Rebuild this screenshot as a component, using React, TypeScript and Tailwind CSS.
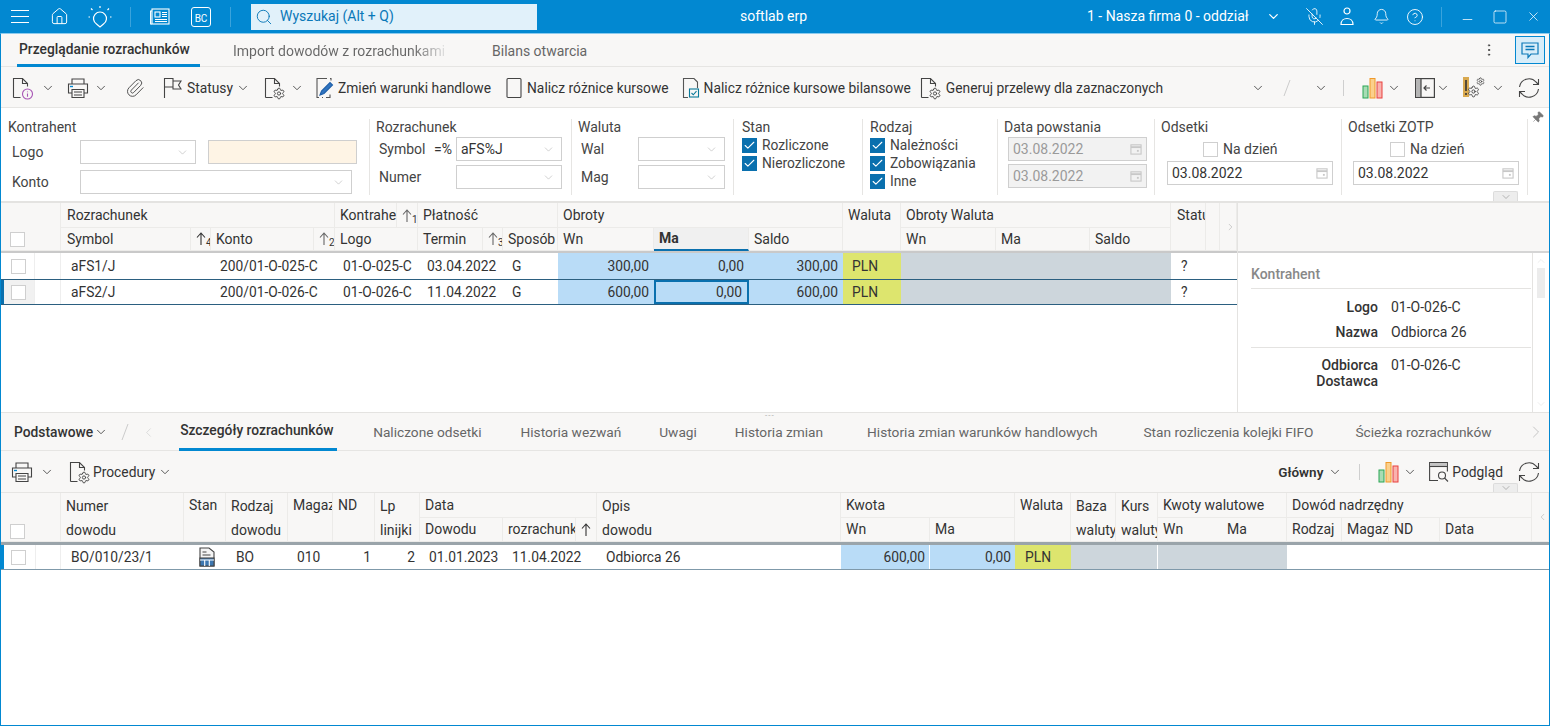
import React from 'react';
import { Bell, Check, ChevronDown, ChevronLeft, ChevronRight, CircleHelp, Home, MicOff, Minus, Paperclip, Pin, Search, Settings, Square, X, EllipsisVertical } from 'lucide-react';

const Chev = ({ className = '' }: { className?: string }) => (
  <ChevronDown size={14} strokeWidth={1.5} className={`shrink-0 text-[#444] ${className}`} />
);

const Doc = ({ children }: { children?: React.ReactNode }) => (
  <svg width="24" height="24" viewBox="0 0 24 24" fill="none" stroke="#444" strokeWidth="1.1" className="shrink-0">
    <path d="M1.500 21.500V2.500h9l5 5v3M10.500 2.500v5h5M1.500 21.500h7" />
    {children}
  </svg>
);

const DocInfo = () => (
  <Doc>
    <circle cx="15.500" cy="18" r="5" stroke="#a855b5" />
    <path d="M15.500 15.500v.8M15.500 17.500v3.200" stroke="#a855b5" />
  </Doc>
);

const DocGear = () => (
  <Doc>
    <Settings x={8.500} y={11} width={13} height={13} strokeWidth={1.7} color="#444" />
  </Doc>
);

const Printer = () => (
  <svg width="22" height="22" viewBox="0 0 22 22" fill="none" stroke="#444" strokeWidth="1.1" className="shrink-0">
    <path d="M5 7V2h12v5M5 16H1.500V7h19v9H17" />
    <path d="M5 12.500h12v8H5zM7 15h8M7 18h8" />
    <path d="M3 9.500h3" stroke="#0288d1" strokeWidth="1.400" />
  </svg>
);

const Flag = () => (
  <svg width="20" height="22" viewBox="0 0 20 22" fill="none" stroke="#444" strokeWidth="1.1" className="shrink-0">
    <path d="M1.500 21V1.500h8.500v2.500h8l-2.500 4 2.500 4h-8V10H1.500M10 4v6" />
  </svg>
);

const PenDoc = () => (
  <svg width="20" height="22" viewBox="0 0 20 22" fill="none" stroke="#555" strokeWidth="1.1" className="shrink-0">
    <path d="M12 1.500H2v19h2M7 20.500h1M11 20.500h4v-3M15 1.500h1v2" />
    <path d="M5 18l1.500-4L15 5.500l2.500 2.500L9 16.500z" fill="#2f74c0" stroke="#1f5fa8" />
  </svg>
);

const PlainDoc = () => (
  <svg width="16" height="22" viewBox="0 0 16 22" fill="none" stroke="#444" strokeWidth="1.1" className="shrink-0">
    <rect x="1" y="1.500" width="14" height="19" rx="1" />
  </svg>
);

const DocCheck = () => (
  <svg width="18" height="22" viewBox="0 0 18 22" fill="none" stroke="#555" strokeWidth="1.1" className="shrink-0">
    <path d="M6 20.500H1.500v-19H12l3.500 3.500v6" />
    <rect x="7.500" y="12" width="9" height="8" stroke="#0a7a9a" />
    <path d="M9.500 16l1.800 1.800 3.200-3.600" stroke="#0a7a9a" />
  </svg>
);

const Chart = () => (
  <svg width="22" height="22" viewBox="0 0 22 22" fill="none" className="shrink-0">
    <rect x="1" y="9" width="5" height="12" fill="#a8dcb4" stroke="#2aa655" />
    <rect x="8" y="1.500" width="5" height="19.500" fill="#fbd08c" stroke="#ef9a2a" />
    <rect x="15" y="5" width="5" height="16" fill="#f9b2ae" stroke="#e8413c" />
  </svg>
);

const PanelArrow = () => (
  <svg width="20" height="20" viewBox="0 0 20 20" fill="none" stroke="#444" strokeWidth="1.2" className="shrink-0">
    <rect x="0.600" y="0.600" width="18.800" height="18.800" />
    <rect x="1" y="1" width="5" height="18" fill="#b5b5b5" stroke="none" />
    <path d="M6 1v18M15 10H9.500M11.500 7.500L9 10l2.500 2.500" />
  </svg>
);

const WarnGear = () => (
  <svg width="24" height="24" viewBox="0 0 24 24" fill="none" stroke="#444" strokeWidth="1.1" className="shrink-0">
    <rect x="1" y="1" width="6" height="20" fill="#d9a94f" stroke="none" />
    <path d="M4 4v11M4 17v2" stroke="#333" strokeWidth="1.600" />
    <Settings x={5} y={9} width={13} height={13} strokeWidth={1.700} color="#444" />
    <Settings x={14} y={1} width={9} height={9} strokeWidth={2} color="#444" />
  </svg>
);

const Refresh = () => (
  <svg width="22" height="22" viewBox="0 0 22 22" fill="none" stroke="#444" strokeWidth="1.1" className="shrink-0">
    <path d="M1.500 10A9.500 9.500 0 0 1 18 5l2.500 2.500M20.500 2v5.500H15" />
    <path d="M20.500 12A9.500 9.500 0 0 1 4 17l-2.500-2.500M1.500 20v-5.500H7" />
  </svg>
);

const Preview = () => (
  <svg width="20" height="20" viewBox="0 0 20 20" fill="none" stroke="#444" strokeWidth="1.1" className="shrink-0">
    <path d="M9 18.500H.600V.600h17.800v9" />
    <rect x="1" y="1" width="17" height="3" fill="#c4c4c4" stroke="none" />
    <path d="M.600 4.500h17.800" />
    <circle cx="13" cy="13.500" r="3.500" />
    <path d="M15.500 16l3.500 3.500" />
  </svg>
);

const StatusDoc = () => (
  <svg width="16" height="20" viewBox="0 0 16 20" fill="none" stroke="#444" strokeWidth="1.1">
    <path d="M1 19V1h9l5 4v14z" fill="#f4f4f4" />
    <path d="M3.500 5h4M3.500 8h8" />
    <rect x="1" y="11" width="14" height="8" fill="#3d77b0" stroke="#444" />
    <path d="M5.700 13v6M10.300 13v6M1 13h14" stroke="#fff" />
  </svg>
);

const Slash = () => (
  <svg width="8" height="18" viewBox="0 0 8 18" fill="none" stroke="#ccc" strokeWidth="1" className="shrink-0">
    <path d="M7 1L1 17" />
  </svg>
);

const Box = ({ checked = false }: { checked?: boolean }) =>
  checked ? (
    <span className="w-[15px] h-[15px] bg-[#0a70ae] flex items-center justify-center shrink-0">
      <Check size={13} strokeWidth={2} className="text-white" />
    </span>
  ) : (
    <span className="w-[15px] h-[15px] bg-white border border-[#cfcfcf] block shrink-0" />
  );

const Field = ({ className, value, arrow = true }: { className: string; value?: string; arrow?: boolean }) => (
  <div className={`h-[24px] border border-[#cfcfcf] flex items-center pl-[4px] pr-[6px] bg-white text-[14px] text-[#333] ${className}`}>
    <span className="flex-1">{value}</span>
    {arrow && <ChevronDown size={13} strokeWidth={1} className="text-[#aaa]" />}
  </div>
);

const Cal = () => (
  <svg width="12" height="12" viewBox="0 0 13 13" fill="none" stroke="#c8c8c8" strokeWidth="1.200" className="shrink-0">
    <rect x="1" y="2" width="11" height="10" />
    <path d="M1 4.500h11" strokeWidth="2" />
    <rect x="7.500" y="7.500" width="2" height="2" fill="#c8c8c8" stroke="none" />
  </svg>
);

const DateField = ({ value, disabled = false, className = '' }: { value: string; disabled?: boolean; className?: string }) => (
  <div className={`h-[24px] border border-[#cfcfcf] flex items-center pl-[4px] pr-[4px] text-[14px] ${disabled ? 'bg-[#f2f2f2] text-[#9a9a9a]' : 'bg-white text-[#333]'} ${className}`}>
    <span className="flex-1">{value}</span>
    <Cal />
  </div>
);

const Label = ({ children, className = '' }: { children: React.ReactNode; className?: string }) => (
  <div className={`text-[14px] leading-[16px] text-[#444] ${className}`}>{children}</div>
);

const CheckRow = ({ label }: { label: string }) => (
  <div className="flex items-center h-[18px] gap-[5px] text-[13.800px] text-[#444]">
    <Box checked />
    <span>{label}</span>
  </div>
);

const TOP_COLS = 'grid grid-cols-[33px_27px_130px_20px_103px_21px_62px_21px_65px_20px_55px_96px_95px_94px_58px_95px_94px_81px_35px_14px_17px]';
const BOT_COLS = 'grid grid-cols-[34px_26px_123px_42px_62px_45px_42px_45px_83px_73px_21px_244px_89px_85px_56px_45px_42px_64px_65px_55px_47px_51px_92px_17px]';

const H = ({ className = '', children }: { className?: string; children?: React.ReactNode }) => (
  <div className={`border-r border-b border-[#ecebe9] pl-[5px] flex items-center overflow-hidden whitespace-nowrap text-[14px] text-[#333] ${className}`}>
    {children}
  </div>
);

const Sort = ({ n, dark = false }: { n?: string; dark?: boolean }) => (
  <H className="pl-[3px] items-end pb-[5px]">
    <svg width="10" height="13" viewBox="0 0 10 13" fill="none" stroke={dark ? '#333' : '#666'} strokeWidth="1.100" className="shrink-0">
      <path d="M5 13V1M1 5.500L5 1l4 4.500" />
    </svg>
    {n && <span className="text-[10px] leading-[10px] -mb-[3px]">{n}</span>}
  </H>
);

const C = ({ className = '', children }: { className?: string; children?: React.ReactNode }) => (
  <div className={`flex items-center overflow-hidden whitespace-nowrap text-[13.800px] text-[#333] ${className}`}>{children}</div>
);

const TopRow = ({ symbol, konto, logo, date, wn, saldo, selected = false }: { symbol: string; konto: string; logo: string; date: string; wn: string; saldo: string; selected?: boolean }) => (
  <div className={`${TOP_COLS} h-[26px] ${selected ? 'border-y border-[#2b5f80] relative' : ''}`}>
    {selected && <span className="absolute left-0 top-0 bottom-0 w-[3px] bg-[#0a70ae]" />}
    <C className={`justify-center pl-[1px] ${selected ? 'bg-[#f1f1f1]' : ''}`}>
      <Box />
    </C>
    <C className={`border-l border-r border-[#eeeeee] ${selected ? 'bg-white' : ''}`} />
    <C className="col-span-2 pl-[10px]">{symbol}</C>
    <C className="col-span-2 pl-[9px]">{konto}</C>
    <C className="col-span-2 pl-[8px]">{logo}</C>
    <C className="col-span-2 pl-[9px]">{date}</C>
    <C className="pl-[9px]">G</C>
    <C className="justify-end pr-[5px] bg-[#b9dcf7]">{wn}</C>
    <C className={`justify-end pr-[5px] bg-[#b9dcf7] ${selected ? 'border-2 border-[#0a70ae]' : ''}`}>0,00</C>
    <C className="justify-end pr-[5px] bg-[#b9dcf7]">{saldo}</C>
    <C className="pl-[9px] bg-[#dde56e]">PLN</C>
    <C className="col-span-3 bg-[#cdd6dc]" />
    <C className="col-span-3 pl-[10px]">?</C>
  </div>
);

const Tab = ({ children, className = '' }: { children: React.ReactNode; className?: string }) => (
  <span className={`text-[13.700px] text-[#666] whitespace-nowrap ${className}`}>{children}</span>
);

export default function App() {
  return (
    <div className="w-[1550px] h-[726px] flex flex-col overflow-hidden bg-white font-[Roboto,sans-serif]">
      {/* title bar */}
      <div className="h-[33px] shrink-0 bg-[#0288d1] flex items-center text-white relative">
        <div className="ml-[11px] w-[18px] flex flex-col gap-[5px]">
          <div className="h-[1px] bg-white" />
          <div className="h-[1px] bg-white" />
          <div className="h-[1px] bg-white" />
        </div>
        <Home size={19} strokeWidth={1.25} className="ml-[21px]" />
        <svg width="24" height="24" viewBox="0 0 24 24" fill="none" stroke="#fff" strokeWidth="1.200" className="ml-[19px]">
          <path d="M8.500 19a6.500 6.500 0 1 1 7 0l-3.500 3z" />
          <path d="M12 3V1M4.500 5L3 3.500M19.500 5L21 3.500M2 12H0.500M22 12h1.500" />
        </svg>
        <div className="ml-[18px] w-[1px] h-[20px] bg-[#3aa3dc]" />
        <svg width="20" height="18" viewBox="0 0 20 18" fill="none" stroke="#fff" strokeWidth="1.100" className="ml-[19px]">
          <rect x="2" y="1" width="17" height="15" />
          <path d="M2 3H.600v13H2" />
          <rect x="5" y="4" width="5" height="5" />
          <path d="M12 4.500h5M12 6.500h5M12 8.500h5M5 11.500h12M5 13.500h12" />
        </svg>
        <div className="ml-[21px] w-[20px] h-[20px] border border-white rounded-[3px] flex items-end justify-center text-[10px] leading-[14px] text-white">BC</div>
        <div className="ml-[19px] w-[1px] h-[20px] bg-[#3aa3dc]" />
        <div className="ml-[20px] w-[286px] h-[26px] bg-[#e1f1fa] flex items-center text-[#0a78b8] text-[14px]">
          <Search size={18} strokeWidth={1.25} className="ml-[4px] mr-[7px]" />
          Wyszukaj (Alt + Q)
        </div>
        <span className="ml-[203px] w-[72px] text-[14px]">softlab erp</span>
        <span className="ml-[275px] text-[14px] whitespace-nowrap">1 - Nasza firma 0 - oddział</span>
        <ChevronDown size={15} strokeWidth={2} className="ml-[17px]" />
        <MicOff size={19} strokeWidth={1.100} className="ml-[24px]" />
        <svg width="14" height="19" viewBox="0 0 14 19" fill="none" stroke="#fff" strokeWidth="1.200" className="ml-[16px]">
          <circle cx="7" cy="4" r="3" />
          <path d="M1 17.500c0-8 12-8 12 0z" />
        </svg>
        <Bell size={17} strokeWidth={1.200} className="ml-[19px]" />
        <CircleHelp size={18} strokeWidth={1.200} className="ml-[16px]" />
        <div className="ml-[17px] w-[1px] h-[20px] bg-[#3aa3dc]" />
        <Minus size={15} strokeWidth={1.200} className="ml-[18px] mt-[6px]" />
        <Square size={16} strokeWidth={1.100} className="ml-[17px]" />
        <X size={15} strokeWidth={1.200} className="ml-[18px]" />
      </div>

      <div className="flex-1 flex flex-col border-x border-b border-[#0288d1] min-h-0 border-t border-t-[#8ccbee]">
        {/* module tabs */}
        <div className="h-[33px] shrink-0 bg-[#f8f7f6] border-b border-[#e6e5e3] flex items-center relative">
          <div className="ml-[16px] w-[183px] h-[33px] border-b-[3px] border-[#0288d1] pl-[2px] pt-[2px] flex items-center">
            <span className="text-[13.800px] font-medium text-[#333] whitespace-nowrap">Przeglądanie rozrachunków</span>
          </div>
          <span className="ml-[33px] pt-[2px] w-[211px] text-[14px] whitespace-nowrap overflow-hidden bg-gradient-to-r from-[#666] from-85% to-[#ddd] bg-clip-text text-transparent">Import dowodów z rozrachunkami</span>
          <span className="ml-[48px] pt-[2px] text-[14px] text-[#666] whitespace-nowrap">Bilans otwarcia</span>
          <EllipsisVertical size={16} strokeWidth={1.500} className="ml-auto text-[#444]" />
          <div className="ml-[18px] mr-[4px] w-[30px] h-[28px] bg-[#d8edf9] border border-[#0288d1] flex items-center justify-center">
            <svg width="18" height="17" viewBox="0 0 18 17" fill="none" stroke="#0a78b8" strokeWidth="1.200">
              <path d="M1 1h16v11h-7l-3 3.500V12H1z" />
              <path d="M4.500 4.500h9M4.500 7.500h9" strokeWidth="1.500" />
            </svg>
          </div>
        </div>

        {/* main toolbar */}
        <div className="h-[41px] shrink-0 bg-[#f8f7f6] border-b border-[#e6e5e3] flex items-center pt-[2px] text-[13.800px] text-[#333] whitespace-nowrap">
          <span className="ml-[11px]"><DocInfo /></span>
          <Chev className="ml-[5px]" />
          <span className="ml-[12px]"><Printer /></span>
          <Chev className="ml-[5px]" />
          <Paperclip size={20} strokeWidth={1.100} className="ml-[17px] text-[#444]" />
          <span className="ml-[18px]"><Flag /></span>
          <span className="ml-[4px]">Statusy</span>
          <Chev className="ml-[3px]" />
          <span className="ml-[14px]"><DocGear /></span>
          <Chev className="ml-[2px]" />
          <span className="ml-[11px]"><PenDoc /></span>
          <span className="ml-[3px]">Zmień warunki handlowe</span>
          <span className="ml-[15px]"><PlainDoc /></span>
          <span className="ml-[5px]">Nalicz różnice kursowe</span>
          <span className="ml-[13px]"><DocCheck /></span>
          <span className="ml-[4px]">Nalicz różnice kursowe bilansowe</span>
          <span className="ml-[9px]"><DocGear /></span>
          <span className="ml-[2px]">Generuj przelewy dla zaznaczonych</span>
          <Chev className="ml-auto" />
          <span className="ml-[18px]"><Slash /></span>
          <Chev className="ml-[23px]" />
          <div className="ml-[15px] w-[1px] h-[16px] bg-[#cfcfcf]" />
          <span className="ml-[18px]"><Chart /></span>
          <Chev className="ml-[3px]" />
          <span className="ml-[14px]"><PanelArrow /></span>
          <Chev className="ml-[1px]" />
          <span className="ml-[12px]"><WarnGear /></span>
          <Chev className="ml-[5px]" />
          <span className="ml-[13px] mr-[9px]"><Refresh /></span>
        </div>

        {/* filters */}
        <div className="h-[95px] shrink-0 bg-white border-b-2 border-[#e4e3e1] flex items-start pt-[11px] relative">
          <div className="w-[369px] h-[76px] border-r border-[#e6e5e3] pl-[7px]">
            <Label>Kontrahent</Label>
            <div className="mt-[5px] flex items-center">
              <Label className="w-[72px] pl-[4px]">Logo</Label>
              <Field className="w-[116px]" />
              <div className="ml-[12px] w-[149px] h-[24px] bg-[#fef4e5] border border-[#cfcfcf]" />
            </div>
            <div className="mt-[6px] flex items-center">
              <Label className="w-[72px] pl-[4px]">Konto</Label>
              <Field className="w-[272px]" />
            </div>
          </div>
          <div className="w-[202px] h-[76px] border-r border-[#e6e5e3] pl-[6px]">
            <Label>Rozrachunek</Label>
            <div className="mt-[2px] flex items-center">
              <Label className="w-[58px] pl-[3px]">Symbol</Label>
              <span className="w-[22px] text-[14px] text-[#333]">=%</span>
              <Field className="w-[106px]" value="aFS%J" />
            </div>
            <div className="mt-[4px] flex items-center">
              <Label className="w-[80px] pl-[3px]">Numer</Label>
              <Field className="w-[106px]" />
            </div>
          </div>
          <div className="w-[162px] h-[76px] border-r border-[#e6e5e3] pl-[6px]">
            <Label>Waluta</Label>
            <div className="mt-[2px] flex items-center">
              <Label className="w-[60px] pl-[3px]">Wal</Label>
              <Field className="w-[87px]" />
            </div>
            <div className="mt-[4px] flex items-center">
              <Label className="w-[60px] pl-[3px]">Mag</Label>
              <Field className="w-[87px]" />
            </div>
          </div>
          <div className="w-[129px] h-[76px] border-r border-[#e6e5e3] pl-[8px]">
            <Label>Stan</Label>
            <div className="mt-[1px]">
              <CheckRow label="Rozliczone" />
              <CheckRow label="Nierozliczone" />
            </div>
          </div>
          <div className="w-[135px] h-[76px] border-r border-[#e6e5e3] pl-[7px]">
            <Label>Rodzaj</Label>
            <div className="mt-[1px]">
              <CheckRow label="Należności" />
              <CheckRow label="Zobowiązania" />
              <CheckRow label="Inne" />
            </div>
          </div>
          <div className="w-[157px] h-[76px] border-r border-[#e6e5e3] pl-[6px]">
            <Label>Data powstania</Label>
            <DateField className="mt-[2px] ml-[4px] w-[139px]" value="03.08.2022" disabled />
            <DateField className="mt-[3px] ml-[4px] w-[139px]" value="03.08.2022" disabled />
          </div>
          <div className="w-[187px] h-[76px] border-r border-[#e6e5e3] pl-[6px]">
            <Label>Odsetki</Label>
            <div className="mt-[6px] ml-[42px] flex items-center gap-[5px] h-[16px] text-[14px] text-[#444]">
              <Box />
              Na dzień
            </div>
            <DateField className="mt-[4px] ml-[6px] w-[166px]" value="03.08.2022" />
          </div>
          <div className="w-[186px] h-[76px] border-r border-[#e6e5e3] pl-[6px]">
            <Label>Odsetki ZOTP</Label>
            <div className="mt-[6px] ml-[42px] flex items-center gap-[5px] h-[16px] text-[14px] text-[#444]">
              <Box />
              Na dzień
            </div>
            <DateField className="mt-[4px] ml-[5px] w-[166px]" value="03.08.2022" />
          </div>
          <Pin size={13} strokeWidth={1} className="absolute right-[5px] top-[3px] rotate-45 text-[#777] fill-[#777]" />
          <div className="absolute left-[1492px] bottom-0 w-[25px] h-[10px] bg-[#ededed] border border-b-0 border-[#dcdcdc] rounded-t-[2px] flex items-center justify-center">
            <ChevronDown size={12} strokeWidth={1} className="text-[#777]" />
          </div>
        </div>

        {/* upper grid + side panel */}
        <div className="h-[210px] shrink-0 flex border-b border-[#e4e3e1]">
          <div className="w-[1236px] shrink-0">
            <div className={`${TOP_COLS} grid-rows-[25px_23px] h-[50px] bg-[#f8f7f6] border-b-2 border-[#c9c9c9]`}>
              <H className="col-span-2 row-span-2 items-end pb-[3px] pl-[9px]"><Box /></H>
              <H className="col-span-4 pl-[6px]">Rozrachunek</H>
              <H>Kontrahe</H>
              <Sort n="1" />
              <H className="col-span-3">Płatność</H>
              <H className="col-span-3">Obroty</H>
              <H className="row-span-2 items-start pt-[2px]">Waluta</H>
              <H className="col-span-3">Obroty Waluta</H>
              <H className="row-span-2 items-start pt-[2px] pl-[6px]">Statu</H>
              <H className="row-span-2" />
              <H className="row-span-2 pl-[0px]"><ChevronRight size={18} strokeWidth={1} className="text-[#999]" /></H>
              <H className="pl-[6px]">Symbol</H>
              <Sort n="4" dark />
              <H>Konto</H>
              <Sort n="2" />
              <H className="col-span-2">Logo</H>
              <H>Termin</H>
              <Sort n="3" />
              <H>Sposób</H>
              <H>Wn</H>
              <H className="font-bold bg-[#f0f0f0] border-b-2 border-b-[#0a70ae]">Ma</H>
              <H>Saldo</H>
              <H>Wn</H>
              <H>Ma</H>
              <H>Saldo</H>
            </div>
            <TopRow symbol="aFS1/J" konto="200/01-O-025-C" logo="01-O-025-C" date="03.04.2022" wn="300,00" saldo="300,00" />
            <TopRow symbol="aFS2/J" konto="200/01-O-026-C" logo="01-O-026-C" date="11.04.2022" wn="600,00" saldo="600,00" selected />
          </div>
          <div className="flex-1 flex flex-col border-l border-[#e4e3e1] min-w-0">
            <div className="h-[50px] shrink-0 bg-[#f8f7f6] border-b-2 border-[#d5d5d5]" />
            <div className="flex-1 flex min-h-0">
              <div className="flex-1 pl-[13px] pr-[1px] text-[14px] min-w-0">
                <div className="h-[36px] pt-[12px] leading-[18px] border-b border-[#e4e3e1] font-medium text-[#888]">Kontrahent</div>
                <div className="grid grid-cols-[127px_1fr] gap-x-[13px] mt-[10px] leading-[16px] text-[#333]">
                  <span className="text-right font-medium h-[25px]">Logo</span>
                  <span>01-O-026-C</span>
                  <span className="text-right font-medium h-[17px]">Nazwa</span>
                  <span>Odbiorca 26</span>
                </div>
                <div className="border-t border-[#e4e3e1] mt-[6px] pt-[9px] grid grid-cols-[127px_1fr] gap-x-[13px] leading-[16px] text-[#333]">
                  <span className="text-right font-medium">Odbiorca<br />Dostawca</span>
                  <span>01-O-026-C</span>
                </div>
              </div>
              <div className="w-[17px] shrink-0 border-l border-[#e4e3e1] flex flex-col items-center text-[#ddd]">
                <ChevronDown size={12} strokeWidth={1} className="rotate-180 mt-[2px]" />
                <div className="w-[8px] h-[30px] bg-[#ececec] mt-[1px]" />
                <ChevronDown size={12} strokeWidth={1} className="mt-auto mb-[2px]" />
              </div>
            </div>
          </div>
        </div>

        {/* detail tabs */}
        <div className="h-[38px] shrink-0 bg-[#f8f7f6] border-b border-[#e6e5e3] flex items-center pt-[1px] relative">
          <span className="absolute left-[764px] top-0 text-[8px] leading-[6px] text-[#aaa] tracking-[1px]">---</span>
          <span className="ml-[13px] text-[13.800px] font-medium text-[#333]">Podstawowe</span>
          <Chev className="ml-[1px]" />
          <span className="ml-[13px]"><Slash /></span>
          <ChevronLeft size={15} strokeWidth={1} className="ml-[12px] text-[#ccc]" />
          <div className="ml-[23px] w-[158px] h-[37px] border-b-[3px] border-[#0288d1] pl-[1px] flex items-center">
            <span className="text-[13.800px] font-medium text-[#333] whitespace-nowrap">Szczegóły rozrachunków</span>
          </div>
          <Tab className="ml-[36px]">Naliczone odsetki</Tab>
          <Tab className="ml-[39px]">Historia wezwań</Tab>
          <Tab className="ml-[38px]">Uwagi</Tab>
          <Tab className="ml-[38px]">Historia zmian</Tab>
          <Tab className="ml-[44px]">Historia zmian warunków handlowych</Tab>
          <Tab className="ml-[46px]">Stan rozliczenia kolejki FIFO</Tab>
          <Tab className="ml-[42px]">Ścieżka rozrachunków</Tab>
          <ChevronRight size={20} strokeWidth={1} className="ml-auto mr-[3px] text-[#bbb]" />
        </div>

        {/* detail toolbar */}
        <div className="h-[42px] shrink-0 bg-[#f8f7f6] border-b border-[#e6e5e3] flex items-center pt-[1px] text-[13.800px] text-[#333] whitespace-nowrap relative">
          <span className="ml-[10px]"><Printer /></span>
          <Chev className="ml-[7px]" />
          <span className="ml-[15px]"><DocGear /></span>
          <span className="ml-[0px]">Procedury</span>
          <Chev className="ml-[3px]" />
          <span className="ml-auto text-[13.500px] font-semibold">Główny</span>
          <Chev className="ml-[5px]" />
          <div className="ml-[17px] w-[1px] h-[16px] bg-[#cfcfcf]" />
          <span className="ml-[18px]"><Chart /></span>
          <Chev className="ml-[3px]" />
          <span className="ml-[12px]"><Preview /></span>
          <span className="ml-[3px]">Podgląd</span>
          <span className="ml-[15px] mr-[9px]"><Refresh /></span>
          <div className="absolute left-[1492px] bottom-0 w-[25px] h-[9px] bg-[#ededed] border border-b-0 border-[#dcdcdc] rounded-t-[2px] flex items-center justify-center">
            <ChevronDown size={12} strokeWidth={1} className="text-[#777]" />
          </div>
        </div>

        {/* lower grid */}
        <div className={`${BOT_COLS} grid-rows-[25px_24px] h-[52px] shrink-0 bg-[#f8f7f6] border-b-[3px] border-[#9aa4aa]`}>
          <H className="col-span-2 row-span-2 items-end pb-[2px] pl-[9px]"><Box /></H>
          <H className="row-span-2 !block pt-[1px] leading-[24px]">Numer<br />dowodu</H>
          <H className="row-span-2 items-start pt-[2px]">Stan</H>
          <H className="row-span-2 !block pt-[1px] leading-[24px]">Rodzaj<br />dowodu</H>
          <H className="row-span-2 items-start pt-[2px]">Magaz</H>
          <H className="row-span-2 items-start pt-[2px]">ND</H>
          <H className="row-span-2 !block pt-[1px] leading-[24px]">Lp<br />linijki</H>
          <H className="col-span-3">Data</H>
          <H className="row-span-2 !block pt-[1px] leading-[24px]">Opis<br />dowodu</H>
          <H className="col-span-2">Kwota</H>
          <H className="row-span-2 items-start pt-[2px]">Waluta</H>
          <H className="row-span-2 !block pt-[1px] leading-[24px]">Baza<br />waluty</H>
          <H className="row-span-2 !block pt-[1px] leading-[24px]">Kurs<br />waluty</H>
          <H className="col-span-2">Kwoty walutowe</H>
          <H className="col-span-4">Dowód nadrzędny</H>
          <H className="row-span-2 pl-[0px]"><ChevronLeft size={18} strokeWidth={1} className="text-[#999]" /></H>
          <H>Dowodu</H>
          <H className="pr-0">rozrachunk</H>
          <Sort dark />
          <H>Wn</H>
          <H>Ma</H>
          <H className="border-r-0">Wn</H>
          <H>Ma</H>
          <H>Rodzaj</H>
          <H>Magaz</H>
          <H>ND</H>
          <H>Data</H>
        </div>
        <div className={`${BOT_COLS} h-[25px] shrink-0 border-b border-[#7f99aa] relative`}>
          <span className="absolute left-0 top-0 bottom-0 w-[3px] bg-[#0288d1]" />
          <C className="justify-center"><Box /></C>
          <C className="border-l border-r border-[#eeeeee]" />
          <C className="pl-[10px]">BO/010/23/1</C>
          <C className="justify-center pl-[3px]"><StatusDoc /></C>
          <C className="pl-[10px]">BO</C>
          <C className="pl-[9px]">010</C>
          <C className="justify-end pr-[4px]">1</C>
          <C className="justify-end pr-[5px]">2</C>
          <C className="pl-[9px]">01.01.2023</C>
          <C className="col-span-2 pl-[9px]">11.04.2022</C>
          <C className="pl-[9px]">Odbiorca 26</C>
          <C className="justify-end pr-[4px] bg-[#b9dcf7] border-r border-white">600,00</C>
          <C className="justify-end pr-[4px] bg-[#b9dcf7]">0,00</C>
          <C className="pl-[10px] bg-[#dde56e]">PLN</C>
          <C className="col-span-2 bg-[#cdd6dc] border-r border-white" />
          <C className="col-span-2 bg-[#cdd6dc]" />
          <C className="col-span-5" />
        </div>
      </div>
    </div>
  );
}
